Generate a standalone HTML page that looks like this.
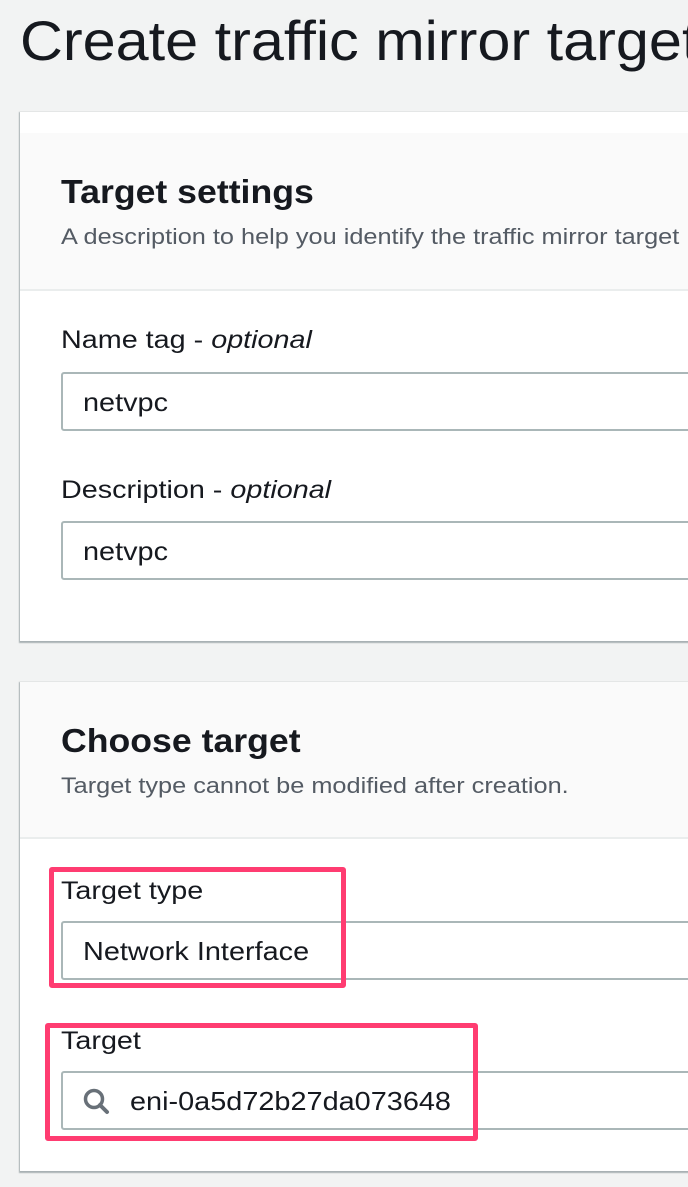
<!DOCTYPE html>
<html><head><meta charset="utf-8"><style>
*{margin:0;padding:0;box-sizing:border-box}
body{width:688px;height:1187px;background:#f2f3f3;position:relative;overflow:hidden;font-family:"Liberation Sans","DejaVu Sans",sans-serif;color:#16191f}
.a{position:absolute;white-space:nowrap;transform-origin:left center}
.card{position:absolute;left:20px;width:700px;background:#fff;box-shadow:0 1px 1px 1px rgba(0,28,36,.3);}
.hd{position:absolute;left:0;right:0;background:#fafafa;border-bottom:2px solid #eaeded}
.h2{font-size:33px;font-weight:bold;transform:scaleX(1.08)}
.desc{font-size:22px;color:#545b64;transform:scaleX(1.15)}
.lbl{font-size:25px;transform:scaleX(1.15)}
.inp{position:absolute;left:41px;width:700px;height:59px;border:2px solid #aab7b8;border-radius:3px;background:#fff}
.val{font-size:26px;transform:scaleX(1.11)}
.red{position:absolute;border:5px solid #ff3c71;border-radius:3px}
</style></head><body>
<div class="a" style="left:20px;top:8px;font-size:56px;transform:scaleX(1.06)">Create traffic mirror target</div>

<div class="card" style="top:112px;height:529px">
  <div class="hd" style="top:21px;height:158px"></div>
  <div class="a h2" style="left:41px;top:61px">Target settings</div>
  <div class="a desc" style="left:41px;top:112px">A description to help you identify the traffic mirror target</div>
  <div class="a lbl" style="left:41px;top:214px">Name tag - <i>optional</i></div>
  <div class="inp" style="top:260px"></div>
  <div class="a val" style="left:63px;top:275px">netvpc</div>
  <div class="a lbl" style="left:41px;top:364px">Description - <i>optional</i></div>
  <div class="inp" style="top:409px"></div>
  <div class="a val" style="left:63px;top:424px">netvpc</div>
</div>

<div class="card" style="top:682px;height:489px">
  <div class="hd" style="top:0;height:157px"></div>
  <div class="a h2" style="left:41px;top:40px">Choose target</div>
  <div class="a desc" style="left:41px;top:91px">Target type cannot be modified after creation.</div>
  <div class="a lbl" style="left:41px;top:195px">Target type</div>
  <div class="inp" style="top:239px"></div>
  <div class="a val" style="left:63px;top:254px">Network Interface</div>
  <div class="a lbl" style="left:41px;top:345px">Target</div>
  <div class="inp" style="top:389px"></div>
  <svg class="a" style="left:62px;top:405px" width="30" height="30" viewBox="0 0 30 30"><circle cx="12" cy="12" r="8.5" fill="none" stroke="#687078" stroke-width="3.5"/><path d="M18 18l7 7" stroke="#687078" stroke-width="4" stroke-linecap="round"/></svg>
  <div class="a val" style="left:110px;top:404px">eni-0a5d72b27da073648</div>
</div>

<div class="red" style="left:49px;top:867px;width:297px;height:121px"></div>
<div class="red" style="left:45px;top:1023px;width:433px;height:118px"></div>
</body></html>
